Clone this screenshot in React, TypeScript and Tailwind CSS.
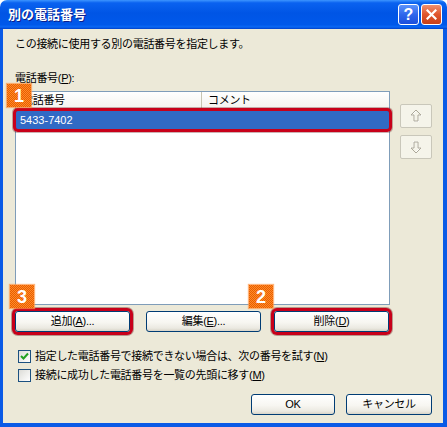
import React from 'react';

const FONT = "font-['Liberation_Sans','Noto_Sans_CJK_JP',sans-serif]";

const Key = ({ k }: { k: string }) => (
  <>
    (<span className="underline underline-offset-1">{k}</span>)
  </>
);

interface BtnProps {
  children: React.ReactNode;
  className?: string;
  marked?: boolean;
}

const XpButton: React.FC<BtnProps> = ({ children, className = '', marked = false }) => (
  <button
    className={`h-[21px] rounded-[3px] border border-[#003c74] bg-[linear-gradient(180deg,#ffffff_0%,#f7f6f1_55%,#ebe9e1_85%,#d8d4c8_100%)] text-[11px] leading-none text-black flex items-center justify-center tracking-[-0.3px] ${
      marked ? 'ring-[3px] ring-[#c8001a] shadow-[0_0_0_4px_rgba(90,0,0,0.35)]' : ''
    } ${className}`}
  >
    {children}
  </button>
);

const Badge = ({ n, className }: { n: string; className: string }) => (
  <div
    className={`absolute w-[24px] h-[23px] flex items-center justify-center bg-[repeating-conic-gradient(#ff8a2a_0%_25%,#e85f00_0%_50%)] bg-[length:2px_2px] shadow-[0_0_1px_1px_rgba(255,150,70,0.7)] text-white font-bold text-[18px] leading-none font-['Liberation_Sans',sans-serif] ${className}`}
  >
    {n}
  </div>
);

const ArrowBtn = ({ down }: { down?: boolean }) => (
  <div className="w-[32px] h-[24px] rounded-[2px] border border-[#c9c7ba] bg-[#f5f4ea] flex items-center justify-center">
    <svg width="12" height="14" viewBox="0 0 12 14" className={down ? 'rotate-180' : ''}>
      <path d="M6.5 1.5 L11.5 6.5 L8.5 6.5 L8.5 12.5 L4.5 12.5 L4.5 6.5 L1.5 6.5 Z" fill="none" stroke="#ffffff" strokeWidth="1" />
      <path d="M6 1 L11 6 L8 6 L8 12 L4 12 L4 6 L1 6 Z" fill="none" stroke="#aca899" strokeWidth="1" />
    </svg>
  </div>
);

const Check = ({ checked }: { checked?: boolean }) => (
  <div className="w-[13px] h-[13px] border border-[#1c5180] bg-[linear-gradient(135deg,#dcdcd7_0%,#ffffff_100%)] flex items-center justify-center shrink-0">
    {checked && (
      <svg width="9" height="9" viewBox="0 0 9 9">
        <path d="M1 4 L3.5 6.5 L8 1.5" fill="none" stroke="#21a121" strokeWidth="2" />
      </svg>
    )}
  </div>
);

export default function App() {
  return (
    <div className={`relative w-[447px] h-[427px] flex flex-col bg-white ${FONT}`}>
      {/* title bar */}
      <div className="h-[29px] rounded-t-[7px] flex items-center pl-[8px] pr-[5px] bg-[linear-gradient(180deg,#3d95ff_0%,#0a62f0_10%,#0055e5_45%,#0058ea_85%,#0a68f5_93%,#003fc8_100%)]">
        <div className="flex-1 text-white font-bold text-[13px] leading-none [text-shadow:1px_1px_#0a1e8c]">
          別の電話番号
        </div>
        <div className="flex gap-[2px]">
          <div className="w-[21px] h-[21px] rounded-[3px] border border-white bg-[linear-gradient(180deg,#5c93fb_0%,#2f67ec_50%,#1c4fdc_100%)] flex items-center justify-center text-white font-bold text-[16px] leading-none font-['Liberation_Sans',sans-serif]">
            ?
          </div>
          <div className="w-[21px] h-[21px] rounded-[3px] border border-white bg-[linear-gradient(180deg,#f09070_0%,#e0552c_50%,#c8401a_100%)] flex items-center justify-center">
            <svg width="11" height="11" viewBox="0 0 11 11">
              <path d="M1.5 1.5 L9.5 9.5 M9.5 1.5 L1.5 9.5" stroke="#ffffff" strokeWidth="2.2" strokeLinecap="square" />
            </svg>
          </div>
        </div>
      </div>

      {/* body */}
      <div className="flex-1 bg-[#ece9d8] border-l-[3px] border-r-[4px] border-b-[4px] border-[#0a5ae6] flex flex-col pl-[12px] pr-[11px] text-[11px] leading-[16px] text-black tracking-[-0.3px]">
        <div className="pt-[7px]">この接続に使用する別の電話番号を指定します。</div>
        <div className="mt-[18px]">
          電話番号<Key k="P" />:
        </div>

        <div className="mt-[5px] flex">
          <div className="w-[375px] h-[214px] border border-[#7f9db9] bg-white flex flex-col">
            <div className="h-[18px] flex bg-[linear-gradient(180deg,#ffffff_0%,#f4f3ee_100%)] border-b-[2px] border-[#e2decd]">
              <div className="w-[186px] pl-[6px] flex items-center border-r border-[#c7c5b2]">電話番号</div>
              <div className="flex-1 pl-[6px] flex items-center">コメント</div>
            </div>
            <div className="mt-[1px] h-[18px] bg-[#316ac5] text-white flex items-center pl-[4px] rounded-[2px] ring-[3px] ring-[#c8001a] shadow-[0_0_0_4px_rgba(90,0,0,0.3)] tracking-normal">
              5433-7402
            </div>
          </div>
          <div className="ml-[10px] pt-[13px] flex flex-col gap-[7px]">
            <ArrowBtn />
            <ArrowBtn down />
          </div>
        </div>

        <div className="mt-[6px] flex">
          <XpButton className="w-[115px]" marked>
            追加<Key k="A" />...
          </XpButton>
          <XpButton className="w-[115px] ml-[16px]">
            編集<Key k="E" />...
          </XpButton>
          <XpButton className="w-[115px] ml-[13px]" marked>
            削除<Key k="D" />
          </XpButton>
        </div>

        <div className="mt-[16px] flex items-center gap-[4px] pl-[3px]">
          <Check checked />
          <span>
            指定した電話番号で接続できない場合は、次の番号を試す<Key k="N" />
          </span>
        </div>
        <div className="mt-[3px] flex items-center gap-[4px] pl-[3px]">
          <Check />
          <span>
            接続に成功した電話番号を一覧の先頭に移す<Key k="M" />
          </span>
        </div>

        <div className="mt-[11px] flex justify-end gap-[11px]">
          <XpButton className="w-[84px]">OK</XpButton>
          <XpButton className="w-[86px]">キャンセル</XpButton>
        </div>
      </div>

      <Badge n="1" className="left-[7px] top-[84px]" />
      <Badge n="3" className="left-[10px] top-[285px]" />
      <Badge n="2" className="left-[249px] top-[285px]" />
    </div>
  );
}
